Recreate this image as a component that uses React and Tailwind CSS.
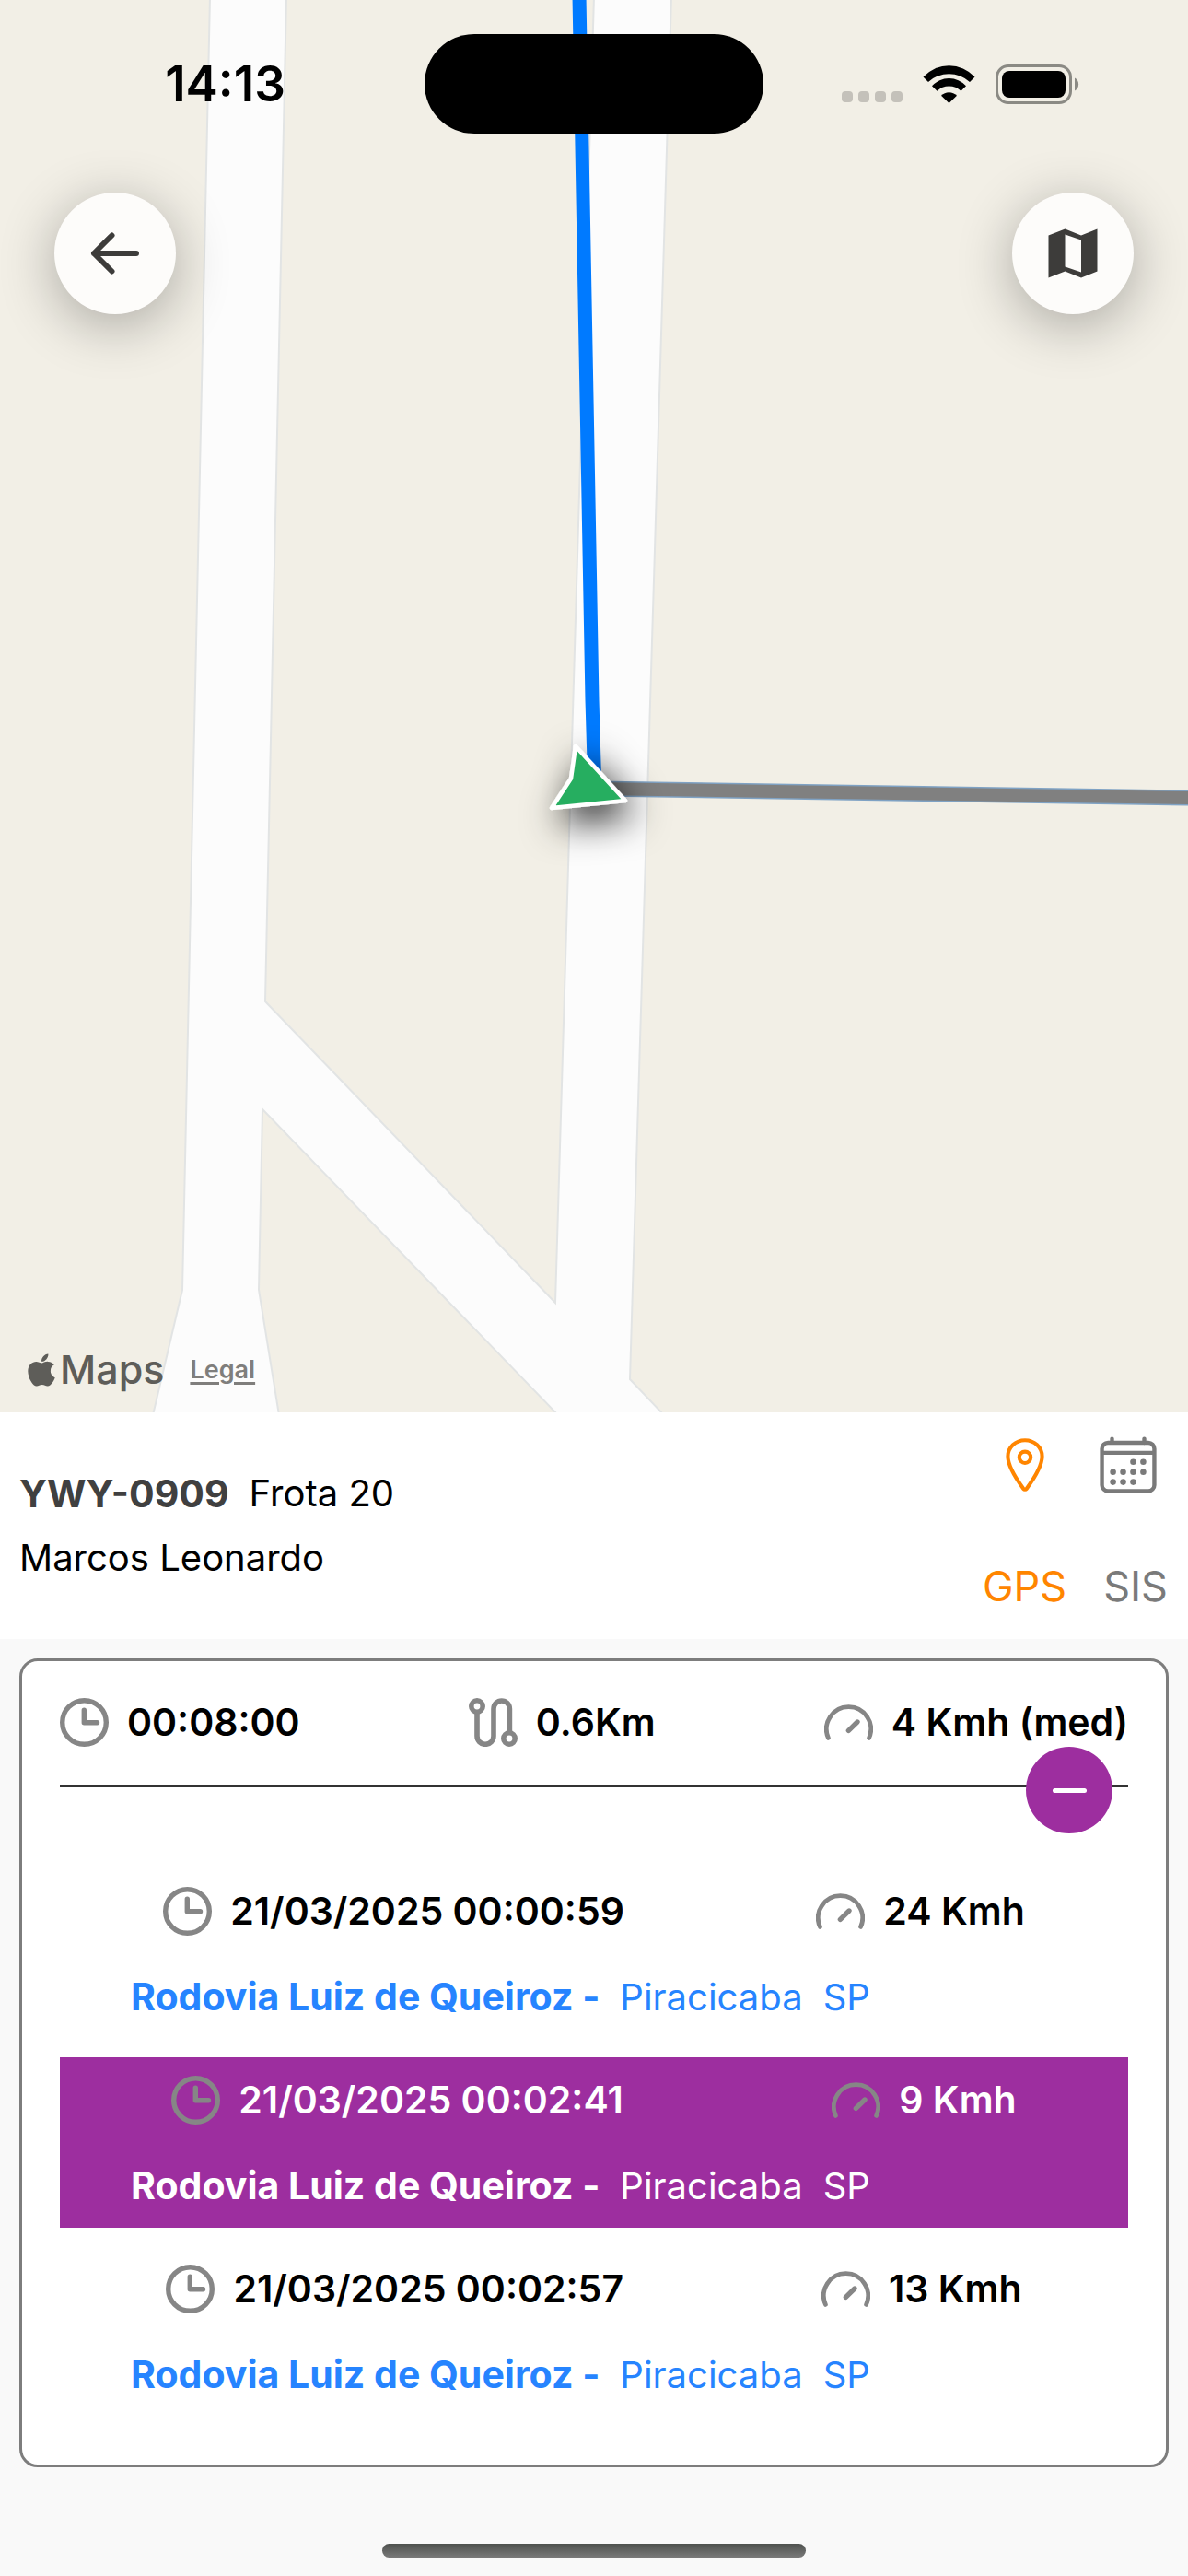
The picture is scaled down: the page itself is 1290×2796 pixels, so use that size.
import { FaApple } from "react-icons/fa";
import { IoCalendarOutline, IoLocationOutline } from "react-icons/io5";

const points = [
  { time: "21/03/2025 00:00:59", speed: "24 Kmh", street: "Rodovia Luiz de Queiroz -", city: "Piracicaba", state: "SP" },
  { time: "21/03/2025 00:02:41", speed: "9 Kmh", street: "Rodovia Luiz de Queiroz -", city: "Piracicaba", state: "SP", active: true },
  { time: "21/03/2025 00:02:57", speed: "13 Kmh", street: "Rodovia Luiz de Queiroz -", city: "Piracicaba", state: "SP" },
];

function ClockIcon() {
  return (
    <svg viewBox="0 0 53 53" className="size-[53px] shrink-0" fill="none" stroke="#868686" strokeWidth="5.4" strokeLinecap="round" strokeLinejoin="round" aria-hidden="true">
      <circle cx="26.5" cy="26.5" r="23.8" />
      <path d="M26.3 13.2V26.7H40.5" />
    </svg>
  );
}

function RouteIcon() {
  return (
    <svg viewBox="0 0 53 53" className="size-[53px] shrink-0" fill="none" stroke="#868686" strokeWidth="5.6" aria-hidden="true">
      <circle cx="9" cy="9" r="6.2" />
      <circle cx="44" cy="44" r="6.2" />
      <path d="M9 15V41.3a9 9 0 0 0 18 0V11.7a8.7 8.7 0 0 1 17.4 0V38" />
    </svg>
  );
}

function GaugeIcon() {
  return (
    <svg viewBox="0 0 53 53" className="size-[53px] shrink-0" fill="none" stroke="#868686" strokeWidth="4.8" strokeLinecap="round" aria-hidden="true">
      <path d="M4.4 43.4A24.1 24.1 0 1 1 48.6 43.4" />
      <path d="M26.4 35.4L36 26" strokeWidth="5.4" />
    </svg>
  );
}

function MapCanvas() {
  return (
    <svg viewBox="0 0 1290 1533" preserveAspectRatio="xMidYMid slice" className="absolute inset-0 h-full w-full" aria-hidden="true">
      <defs>
        <filter id="pin-shadow" x="-150%" y="-150%" width="400%" height="400%">
          <feDropShadow dx="8" dy="14" stdDeviation="21" floodColor="#000" floodOpacity="0.9" />
        </filter>
      </defs>
      <rect width="1290" height="1533" fill="#f2efe6" />
      <path
        fill="#fcfcfc"
        fillRule="evenodd"
        stroke="#e2e4e4"
        strokeWidth="2"
        d="M228 -4L198 1400L166 1536H303L281 1400L285 1204L606 1536H721L684 1497L729 -4H645L603 1414L288 1087L311 -4Z"
      />
      <path d="M646 856L1294 866" stroke="#7fa2c4" strokeWidth="17" />
      <path d="M646 856L1294 866" stroke="#808080" strokeWidth="14" />
      <path d="M629 -4L643 760L646 860" fill="none" stroke="#007aff" strokeWidth="15" />
      <path d="M625 810L679 869L599 877L620 845Z" fill="#27ae60" stroke="#fff" strokeWidth="4.5" strokeLinejoin="round" filter="url(#pin-shadow)" />
    </svg>
  );
}

function StatusBar() {
  return (
    <div className="relative grid grid-cols-[1fr_368px_1fr] items-center pt-[37px]">
      <span className="pl-7 text-center text-[53px] leading-none font-semibold text-black">14:13</span>
      <div className="h-[108px] rounded-full bg-black" />
      <div className="flex items-center justify-center gap-[22px] pr-8">
        <div className="flex gap-[6px] pt-7">
          <span className="size-[12px] rounded-[4px] bg-[#c4c1ba]" />
          <span className="size-[12px] rounded-[4px] bg-[#c4c1ba]" />
          <span className="size-[12px] rounded-[4px] bg-[#c4c1ba]" />
          <span className="size-[12px] rounded-[4px] bg-[#c4c1ba]" />
        </div>
        <svg viewBox="0 0 57 41" className="h-[41px] w-[57px]" aria-hidden="true">
          <path d="M0.5 12.5A38 38 0 0 1 56.5 12.5L51 18A33 33 0 0 0 6 18Z" />
          <path d="M10 22.3A25 25 0 0 1 47 22.3L41.5 27.7A19 19 0 0 0 15.5 27.7Z" />
          <path d="M20 32.7A12 12 0 0 1 37 32.7L28.5 41Z" />
        </svg>
        <svg viewBox="0 0 92 43" className="h-[43px] w-[92px]" aria-hidden="true">
          <rect x="1.5" y="1.5" width="80" height="40" rx="12.5" fill="none" stroke="#8b8a84" strokeWidth="3" />
          <rect x="7" y="7" width="69" height="29" rx="8" />
          <path d="M86 14.5a8 8 0 0 1 0 14Z" fill="#8b8a84" />
        </svg>
      </div>
    </div>
  );
}

function Point({ time, speed, street, city, state, active }) {
  return (
    <li className={active ? "h-[185px] bg-[#9d2e9f] px-2 pt-5 text-white" : "h-[185px] px-2 pt-5 text-black"}>
      <div className="flex items-center justify-around text-[41px] font-semibold">
        <span className="flex items-center gap-5">
          <ClockIcon />
          {time}
        </span>
        <span className="flex items-center gap-5">
          <GaugeIcon />
          {speed}
        </span>
      </div>
      <p className={active ? "mt-10 flex gap-[22px] pl-[69px]" : "mt-10 flex gap-[22px] pl-[69px] text-[#2684ff]"}>
        <strong className="text-[41px] font-bold">{street}</strong>
        <span>{city}</span>
        <span>{state}</span>
      </p>
    </li>
  );
}

export default function App() {
  return (
    <main className="flex min-h-screen flex-col bg-[#f9f9f9] font-[Inter,sans-serif] text-[40px] leading-[53px]">
      <section className="relative flex aspect-[1290/1533] w-full flex-col overflow-hidden">
        <MapCanvas />
        <StatusBar />
        <div className="relative mt-16 flex justify-between px-[59px]">
          <button type="button" aria-label="Voltar" className="flex size-[132px] items-center justify-center rounded-full bg-[#fdfcfa] shadow-[0_12px_60px_rgba(0,0,0,0.3)]">
            <svg viewBox="0 0 54 54" className="size-[54px]" fill="none" stroke="#3d3c3a" strokeWidth="6" strokeLinecap="round" strokeLinejoin="round" aria-hidden="true">
              <path d="M50 27H4M23.5 7.5L4 27L23.5 46.5" />
            </svg>
          </button>
          <button type="button" aria-label="Tipo de mapa" className="flex size-[132px] items-center justify-center rounded-full bg-[#fdfcfa] shadow-[0_12px_60px_rgba(0,0,0,0.3)]">
            <svg viewBox="0 0 54 54" className="size-[54px]" fill="#3d3c3a" fillRule="evenodd" aria-hidden="true">
              <path d="M0.5 7.5L18.5 0.5L36 7.5L53.5 0.5V46.5L36 53.5L18.5 46.5L0.5 53.5ZM18.5 6.5V41.5L36 47.5V12.5Z" />
            </svg>
          </button>
        </div>
        <div className="relative mt-auto flex items-center px-[25px] pb-5">
          <FaApple className="size-10 text-[#5e5d59]" aria-hidden="true" />
          <span className="text-[43px] font-medium text-[#5e5d59]">Maps</span>
          <a href="#legal" className="ml-7 text-[27px] font-semibold text-[#7f7e7c] underline decoration-[3px] underline-offset-[4px]">
            Legal
          </a>
        </div>
      </section>

      <section className="flex h-[246px] justify-between bg-white pl-[21px]">
        <div className="pt-[53px] leading-[70px] text-black">
          <p className="flex gap-[22px]">
            <strong className="text-[41px] font-bold text-[#404040]">YWY-0909</strong>
            <span>Frota 20</span>
          </p>
          <p>Marcos Leonardo</p>
        </div>
        <div className="flex flex-col items-end pt-[22px] pr-[22px]">
          <div className="flex items-center gap-11 pr-2">
            <button type="button" aria-label="Ver no mapa" className="text-[#ff8500]">
              <IoLocationOutline className="size-[66px]" />
            </button>
            <button type="button" aria-label="Escolher data" className="text-[#7a7a7a]">
              <IoCalendarOutline className="size-[70px]" />
            </button>
          </div>
          <div className="mt-[70px] flex gap-10 text-[45px]">
            <button type="button" className="text-[#ff8500]">GPS</button>
            <button type="button" className="text-[#7a7a7a]">SIS</button>
          </div>
        </div>
      </section>

      <section className="mx-[21px] mt-[21px] rounded-[20px] border-[3px] border-[#7d7d7d] bg-white px-[41px] pt-10 pb-[52px]">
        <div className="flex items-center justify-between text-[41px] font-semibold text-black">
          <span className="flex items-center gap-5">
            <ClockIcon />
            00:08:00
          </span>
          <span className="flex items-center gap-5">
            <RouteIcon />
            0.6Km
          </span>
          <span className="flex items-center gap-5">
            <GaugeIcon />
            4 Kmh (med)
          </span>
        </div>
        <div className="relative mt-[41px] border-t-[3px] border-[#333]">
          <button type="button" aria-label="Recolher" className="absolute right-[17px] -top-11 flex size-[94px] items-center justify-center rounded-full bg-[#9d2e9f]">
            <span className="h-[5px] w-[37px] rounded-full bg-white" />
          </button>
        </div>
        <ul className="mt-[88px] flex flex-col gap-5">
          {points.map((point) => (
            <Point key={point.time} {...point} />
          ))}
        </ul>
      </section>

      <div className="mx-auto mt-auto mb-5 h-[15px] w-[460px] rounded-full bg-linear-to-b from-[#4f524f] to-[#7a7a7a]" />
    </main>
  );
}
